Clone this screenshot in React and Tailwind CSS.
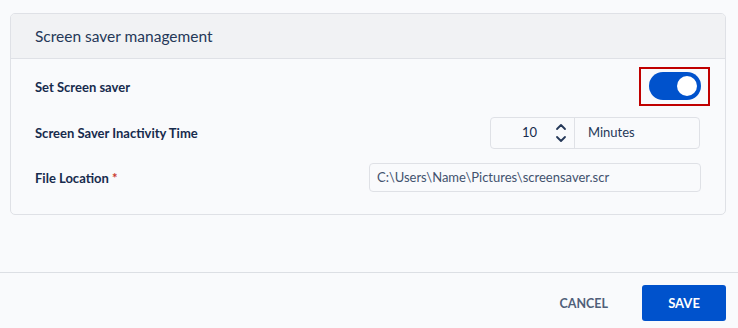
import React, { useState } from 'react';

const Chevrons = () => (
	<svg width="12" height="22" viewBox="0 0 12 22" fill="none" stroke="#253858" strokeWidth="1.8" strokeLinecap="round" strokeLinejoin="round">
		<path d="M2 7 L6 3 L10 7" />
		<path d="M2 15 L6 19 L10 15" />
	</svg>
);

const App = () => {
	const [on, setOn] = useState(true);

	return (
		<div className="w-[738px] h-[328px] bg-[#f9fafc] flex flex-col text-[#172b4d] font-['Lato']">
			<div className="h-[273px] pt-[13px] px-[10px] border-b border-[#dcdfe4]">
				<div className="w-[716px] border border-[#dfe1e6] rounded-[5px] overflow-hidden pb-[12px]">
					<div className="h-[45px] bg-[#f1f2f4] border-b border-[#dfe1e6] flex items-center pl-[24px] pt-[1px] text-[15.5px] text-[#253858]">
						Screen saver management
					</div>
					<div className="pl-[24px] pr-[24px]">
						<div className="h-[54px] flex items-center justify-between">
							<span className="text-[13px] font-bold pt-[3px]">Set Screen saver</span>
							<div className="w-[71px] h-[39px] border-2 border-[#c00000] flex items-center justify-center mr-[-9px]">
								<button
									onClick={() => setOn(!on)}
									className={`w-[52px] h-[28px] rounded-full flex items-center px-[4px] ${on ? 'bg-[#0052cc] justify-end' : 'bg-[#a5adba] justify-start'}`}
								>
									<span className="w-[20px] h-[20px] rounded-full bg-white" />
								</button>
							</div>
						</div>
						<div className="h-[40px] flex items-center justify-between">
							<span className="text-[13px] font-bold pt-[2px]">Screen Saver Inactivity Time</span>
							<div className="w-[210px] h-[32px] border border-[#dfe1e6] rounded-[4px] flex mr-[1px]">
								<div className="w-[84px] flex items-center justify-end gap-[18px] pr-[7px] border-r border-[#dfe1e6] text-[13px]">
									<span>10</span>
									<Chevrons />
								</div>
								<div className="flex items-center pl-[13px] text-[13px] text-[#253858]">Minutes</div>
							</div>
						</div>
						<div className="h-[49px] flex items-center justify-between">
							<span className="text-[13px] font-bold pt-[3px]">
								File Location <span className="text-[#c9372c]">*</span>
							</span>
							<div className="w-[332px] h-[29px] border border-[#dfe1e6] rounded-[4px] flex items-center pl-[7px] text-[13px] text-[#42526e]">
								C:\Users\Name\Pictures\screensaver.scr
							</div>
						</div>
					</div>
				</div>
			</div>
			<div className="flex-1 flex items-start justify-end pt-[12px] pr-[12px] gap-[22px]">
				<button className="text-[12.5px] font-bold text-[#505f79] px-[12px] h-[36px] pt-[2px]">CANCEL</button>
				<button className="w-[84px] h-[36px] rounded-[3px] bg-[#0052cc] text-white text-[13px] font-bold pt-[1px]">SAVE</button>
			</div>
		</div>
	);
};

export default App;
